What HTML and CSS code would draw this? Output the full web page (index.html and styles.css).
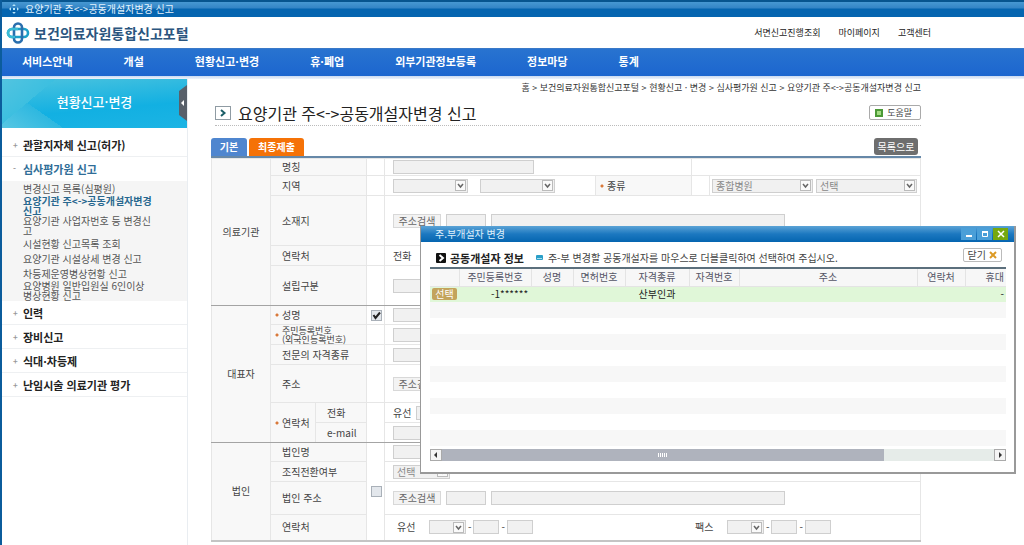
FILE: index.html
```
<!DOCTYPE html>
<html lang="ko">
<head>
<meta charset="utf-8">
<title>요양기관 주&lt;-&gt;공동개설자변경 신고</title>
<link rel="stylesheet" href="styles.css">
</head>
<body>
<div class="page">
  <div class="titlebar">
    <svg width="10" height="10" viewBox="0 0 10 10" aria-hidden="true"><path d="M5 0l1.800 2H3.200zM5 10L3.200 8h3.600zM0 5l2-1.800v3.600zM10 5L8 3.200v3.600zM4 4h2v2H4z" fill="#b9e6fa"/></svg>
    <span>요양기관 주&lt;-&gt;공동개설자변경 신고</span>
  </div>
  <header class="header">
    <a class="logo" href="#">
      <svg width="24" height="22" viewBox="0 0 24 22" fill="none" stroke-width="2.600" aria-hidden="true">
        <rect x="2" y="7" width="20" height="8" rx="4" stroke="#1da0c8"/>
        <rect x="8" y="1.500" width="8" height="19" rx="4" stroke="#2a6fae"/>
        <path d="M12 7H6a4 4 0 0 0 0 8h3" stroke="#3abbd5"/>
      </svg>
      <span>보건의료자원통합신고포털</span>
    </a>
    <div class="util"><a href="#">서면신고진행조회</a><a href="#">마이페이지</a><a href="#">고객센터</a></div>
  </header>
  <nav class="nav">
    <a href="#">서비스안내</a><a href="#">개설</a><a href="#">현황신고·변경</a><a href="#">휴·폐업</a><a href="#">외부기관정보등록</a><a href="#">정보마당</a><a href="#">통계</a>
  </nav>
  <div class="body">
    <aside class="side">
      <div class="banner">
        <h2>현황신고·변경</h2>
        <button class="fold" aria-label="메뉴 접기"><svg width="9" height="36" viewBox="0 0 9 36"><path d="M9 0v36L1 30V6z" fill="#58606a"/><path d="M6 15v6l-3-3z" fill="#fff"/></svg></button>
      </div>
      <ul class="menu">
        <li><a href="#">관할지자체 신고(허가)</a></li>
        <li class="open"><a href="#">심사평가원 신고</a>
          <ul class="submenu">
            <li><a href="#">변경신고 목록(심평원)</a></li>
            <li class="current double"><a href="#">요양기관 주&lt;-&gt;공동개설자변경<br>신고</a></li>
            <li class="double"><a href="#">요양기관 사업자번호 등 변경신<br>고</a></li>
            <li><a href="#">시설현황 신고목록 조회</a></li>
            <li><a href="#">요양기관 시설상세 변경 신고</a></li>
            <li><a href="#">차등제운영병상현황 신고</a></li>
            <li class="double"><a href="#">요양병원 일반입원실 6인이상<br>병상현황 신고</a></li>
          </ul>
        </li>
        <li><a href="#">인력</a></li>
        <li><a href="#">장비신고</a></li>
        <li><a href="#">식대·차등제</a></li>
        <li><a href="#">난임시술 의료기관 평가</a></li>
      </ul>
    </aside>
    <main class="main">
      <div class="crumbs">홈 &gt; 보건의료자원통합신고포털 &gt; 현황신고 · 변경 &gt; 심사평가원 신고 &gt; 요양기관 주&lt;-&gt;공동개설자변경 신고</div>
      <div class="heading">
        <svg class="heading-icon" width="16" height="14" viewBox="0 0 16 14" aria-hidden="true"><rect x=".5" y=".5" width="15" height="13" fill="#fff" stroke="#8f9ba3"/><path d="M6 4l3.500 3L6 10" fill="none" stroke="#1c5e68" stroke-width="2"/></svg>
        <h1>요양기관 주&lt;-&gt;공동개설자변경 신고</h1>
        <button class="help"><svg width="8" height="8" viewBox="0 0 8 8" aria-hidden="true"><path d="M0 0h8v8H0z" fill="#4c9a36"/><path d="M2 2h4v4H2z" fill="#a4dc84"/></svg>도움말</button>
      </div>
      <div class="tabs">
        <button class="tab blue">기본</button><button class="tab orange">최종제출</button>
        <button class="list">목록으로</button>
      </div>
      <table class="form">
        <colgroup><col class="c-group"><col class="c-label"><col class="c-sub"><col class="c-check"><col class="c-field"><col class="c-kind"><col class="c-check"><col></colgroup>
        <tbody>
          <tr class="h17"><th rowspan="5" class="group">의료기관</th><th colspan="2">명칭</th><td></td><td colspan="2"><div class="row"><input class="w141" aria-label="명칭"></div></td><td colspan="2"></td></tr>
          <tr class="h20"><th colspan="2">지역</th><td></td><td><div class="row wide"><select class="w75" aria-label="시도"><option></option></select><select class="w75" aria-label="시군구"><option></option></select></div></td><th class="need">종류</th><td></td><td class="tight"><div class="row narrow"><select class="grow" aria-label="종류"><option>종합병원</option></select><select class="grow" aria-label="세부 종류"><option>선택</option></select></div></td></tr>
          <tr class="h50"><th colspan="2">소재지</th><td></td><td colspan="4"><div class="row"><button class="addr">주소검색</button><input class="w40" aria-label="우편번호"><input class="w294" aria-label="소재지"></div></td></tr>
          <tr class="h20"><th colspan="2">연락처</th><td></td><td colspan="4">전화</td></tr>
          <tr class="h40"><th colspan="2">설립구분</th><td></td><td colspan="4"><div class="row"><input class="w141" aria-label="설립구분"></div></td></tr>
        </tbody>
        <tbody>
          <tr class="h19"><th rowspan="6" class="group">대표자</th><th colspan="2" class="need">성명</th><td class="check"><input type="checkbox" checked aria-label="대표자 성명"></td><td colspan="4"><div class="row"><input class="w141" aria-label="성명"></div></td></tr>
          <tr class="h20"><th colspan="2" class="need two">주민등록번호<br>(외국인등록번호)</th><td></td><td colspan="4"><div class="row"><input class="w141" aria-label="주민등록번호"></div></td></tr>
          <tr class="h20"><th colspan="2">전문의 자격종류</th><td></td><td colspan="4"><div class="row"><input class="w141" aria-label="전문의 자격종류"></div></td></tr>
          <tr class="h38"><th colspan="2">주소</th><td></td><td colspan="4"><div class="row"><button class="addr">주소검색</button></div></td></tr>
          <tr class="h20"><th rowspan="2" class="need">연락처</th><th>전화</th><td rowspan="2"></td><td colspan="4"><div class="row"><label for="tel">유선</label><input id="tel" class="w40"></div></td></tr>
          <tr class="h20"><th>e-mail</th><td colspan="4"><div class="row"><input class="w141" aria-label="e-mail"></div></td></tr>
        </tbody>
        <tbody>
          <tr class="h19"><th rowspan="4" class="group">법인</th><th colspan="2">법인명</th><td rowspan="4" class="check"><input type="checkbox" aria-label="법인"></td><td colspan="4"><div class="row"><input class="w141" aria-label="법인명"></div></td></tr>
          <tr class="h20"><th colspan="2">조직전환여부</th><td colspan="4"><div class="row"><select class="w57" aria-label="조직전환여부"><option>선택</option></select></div></td></tr>
          <tr class="h33"><th colspan="2">법인 주소</th><td colspan="4"><div class="row"><button class="addr">주소검색</button><input class="w40" aria-label="법인 우편번호"><input class="w294" aria-label="법인 주소"></div></td></tr>
          <tr class="h26"><th colspan="2">연락처</th><td colspan="4"><div class="phones">
            <div class="phone"><label for="p1">유선</label><select id="p1" class="w37"><option></option></select>-<input class="w26" aria-label="유선 국번">-<input class="w26" aria-label="유선 번호"></div>
            <div class="phone"><label for="f1">팩스</label><select id="f1" class="w37"><option></option></select>-<input class="w26" aria-label="팩스 국번">-<input class="w26" aria-label="팩스 번호"></div>
          </div></td></tr>
        </tbody>
      </table>
    </main>
  </div>
</div>

<section class="popup" role="dialog" aria-label="주.부개설자 변경">
  <div class="popup-bar">
    <span>주.부개설자 변경</span>
    <div class="controls">
      <button aria-label="최소화"><svg width="8" height="8" viewBox="0 0 8 8"><path d="M1 5h6v2H1z" fill="#fff"/></svg></button>
      <button aria-label="최대화"><svg width="8" height="8" viewBox="0 0 8 8"><path d="M1.500 2h5v4.500h-5z" fill="none" stroke="#fff"/><path d="M1 1h6v2H1z" fill="#fff"/></svg></button>
      <button class="x" aria-label="닫기"><svg width="8" height="8" viewBox="0 0 8 8"><path d="M1 1l6 6M7 1L1 7" stroke="#fff" stroke-width="1.500"/></svg></button>
    </div>
  </div>
  <div class="popup-body">
    <div class="popup-head">
      <svg width="10" height="10" viewBox="0 0 10 10" aria-hidden="true"><rect width="10" height="10" rx="1" fill="#111"/><path d="M3.500 2l3.500 3-3.500 3" fill="none" stroke="#fff" stroke-width="2"/></svg>
      <h2>공동개설자 정보</h2>
      <svg width="7" height="6" viewBox="0 0 7 6" aria-hidden="true"><rect width="7" height="5" rx="1" fill="#2b9fc8"/><path d="M1 3h5v1H1z" fill="#a6dcee"/></svg>
      <p>주-부 변경할 공동개설자를 마우스로 더블클릭하여 선택하여 주십시오.</p>
      <button class="close">닫기<svg width="8" height="8" viewBox="0 0 8 8" aria-hidden="true"><path d="M1 1l6 6M7 1L1 7" stroke="#dc9a24" stroke-width="2"/></svg></button>
    </div>
    <table class="grid">
      <colgroup><col class="g29"><col class="g72"><col class="g42"><col class="g52"><col class="g64"><col class="g50"><col><col class="g48"><col class="g41"></colgroup>
      <thead><tr><th></th><th>주민등록번호</th><th>성명</th><th>면허번호</th><th>자격종류</th><th>자격번호</th><th>주소</th><th>연락처</th><th class="end">휴대</th></tr></thead>
      <tbody>
        <tr class="picked"><td><button class="pick">선택</button></td><td class="rrn">-1******</td><td></td><td></td><td>산부인과</td><td></td><td></td><td></td><td class="end">-</td></tr>
        <tr><td colspan="9"></td></tr><tr><td colspan="9"></td></tr><tr><td colspan="9"></td></tr><tr><td colspan="9"></td></tr><tr><td colspan="9"></td></tr><tr><td colspan="9"></td></tr><tr><td colspan="9"></td></tr><tr><td colspan="9"></td></tr><tr><td colspan="9"></td></tr>
      </tbody>
    </table>
    <div class="scroll">
      <button aria-label="왼쪽"><svg width="6" height="6" viewBox="0 0 6 6"><path d="M4 0v6L1 3z" fill="#333"/></svg></button>
      <div class="track"><div class="thumb"><i></i><i></i><i></i><i></i><i></i></div></div>
      <button aria-label="오른쪽"><svg width="6" height="6" viewBox="0 0 6 6"><path d="M2 0v6l3-3z" fill="#333"/></svg></button>
    </div>
  </div>
</section>
</body>
</html>
```

FILE: styles.css
```
* { box-sizing: border-box; }
body { margin: 0; font: 10px/12px "Noto Sans CJK KR", sans-serif; color: #444; background: #fff; }
a { color: inherit; text-decoration: none; }
h1, h2, p, ul { margin: 0; padding: 0; }
ul { list-style: none; }
button, input, select { font: inherit; color: inherit; margin: 0; padding: 0; border: 0; border-radius: 0; background: none; }
svg { flex: none; display: block; }

.page { min-height: 100vh; display: flex; flex-direction: column; border-left: 2px solid #0b5c9c; }
.titlebar { height: 17px; display: flex; align-items: center; gap: 6px; padding-left: 7px; font-size: 10px; color: #e4f3fc; background: linear-gradient(#07558f 0, #07558f 2px, #4798d2 2px, #3485c6 8px, #0565b0 9px, #0565b0 100%); }
.header { height: 31px; display: flex; align-items: center; justify-content: space-between; padding: 0 93px 0 4px; }
.logo { display: flex; align-items: center; gap: 4px; font-size: 14px; line-height: 20px; font-weight: 700; color: #2b557e; }
.util { display: flex; gap: 18px; font-size: 9px; color: #222; }
.nav { height: 31px; display: flex; align-items: center; gap: 51px; padding: 0 20px 6px; font-size: 11px; font-weight: 700; color: #fff; background: linear-gradient(#4b7fbf 0, #2873d0 1px, #1c66cf 28px, #c8d9f1 28px, #eef3fb 31px); }

.body { flex: 1; display: flex; }
.side { width: 186px; flex: none; border-right: 1px solid #e9edf1; }
.banner { height: 49px; display: flex; align-items: center; justify-content: center; position: relative; padding-bottom: 4px; color: #fff; background: linear-gradient(140deg, #52c4e0 0, #3dbfe0 22%, transparent 22%), linear-gradient(35deg, #58c7e3 0, #2eb8e0 24%, transparent 24%), linear-gradient(175deg, #4cc3de, #12b0e2 60%, #1cb4e4); }
.banner h2 { font-size: 13px; line-height: 16px; font-weight: 500; }
.fold { position: absolute; right: 0; top: 6px; }
.menu { padding-top: 5px; font-size: 11px; font-weight: 700; color: #222; }
.menu > li { border-bottom: 1px solid #eef0f2; }
.menu > li > a { display: flex; align-items: center; height: 23px; padding-left: 11px; }
.menu > li > a::before { content: "+"; width: 10px; font-size: 8px; color: #999; }
.menu > .open > a { color: #2f6d97; height: 24px; }
.menu > .open > a::before { content: "-"; }
.menu > .open { border-bottom: 0; }
.submenu { background: #f5f5f5; font-size: 10px; line-height: 10px; font-weight: 400; color: #555; padding-left: 21px; }
.submenu li { height: 15px; display: flex; align-items: center; }
.submenu .double { height: 20px; }
.submenu .current { color: #28688f; font-weight: 700; }

.main { flex: 1; min-width: 0; padding: 3px 103px 4px 23px; }
.crumbs { font-size: 9px; text-align: right; color: #333; white-space: nowrap; }
.heading { margin: 6px 0 0 4px; height: 26px; display: flex; align-items: center; gap: 7px; border-bottom: 1px dotted #bbb; }
.heading h1 { font-size: 16px; line-height: 20px; font-weight: 400; color: #222; flex: 1; }
.help { height: 15px; padding: 0 8px 0 5px; display: flex; align-items: center; gap: 4px; font-size: 9px; border: 1px solid #aaa; border-radius: 2px; background: #fff; }
.tabs { display: flex; gap: 2px; align-items: flex-end; margin-top: 12px; height: 20px; border-bottom: 2px solid #6688a8; }
.tab { height: 18px; border-radius: 3px 3px 0 0; color: #fff; font-weight: 700; }
.blue { width: 36px; background: #4f86cf; }
.orange { width: 55px; background: #f57207; }
.list { height: 17px; width: 44px; margin: 0 3px 1px auto; border-radius: 3px; background: #6e6e6e; color: #fff; }

.form { width: 100%; table-layout: fixed; border-collapse: collapse; border-right: 1px solid #ccc; border-bottom: 2px solid #c4c4c4; }
.c-group { width: 59px; } .c-label { width: 45px; } .c-sub { width: 51px; } .c-check { width: 18px; } .c-field { width: 211px; } .c-kind { width: 96px; }
.form th, .form td { padding: 0; border: 1px solid #e6e6e6; text-align: left; font-weight: 400; white-space: nowrap; }
.form th { background: #f8f8f8; padding-left: 11px; color: #444; }
.form td { padding-left: 8px; }
.form .group { text-align: center; padding: 0; }
.form .need { background: radial-gradient(circle, #d9793a 0, #d9793a 1px, transparent 2px) 4px 50% / 4px 4px no-repeat #f8f8f8; }
.form .two { font-size: 9px; line-height: 9px; }
.form .check { padding: 0 0 0 4px; vertical-align: middle; }
.form .tight { padding: 0 3px 0 2px; }
.form tbody + tbody { border-top: 1px solid #a4a4a4; }
.form tbody + tbody tr:first-child > * { border-top-color: #a4a4a4; border-top-style: double; }
.h17 { height: 17px; } .h19 { height: 19px; } .h20 { height: 20px; } .h26 { height: 26px; } .h33 { height: 33px; } .h38 { height: 38px; } .h40 { height: 40px; } .h50 { height: 50px; }
.row { display: flex; align-items: center; gap: 5px; }
.wide { gap: 12px; } .narrow { gap: 3px; }
.form input, .form select { height: 14px; min-width: 0; border: 1px solid #cfcfcf; background-color: #f1f1f1; color: #888; }
.form select { appearance: none; padding-left: 3px; line-height: 12px; background-image: url("data:image/svg+xml,%3Csvg xmlns='http://www.w3.org/2000/svg' width='11' height='11'%3E%3Crect x='.5' y='.5' width='10' height='10' fill='%23fafafa' stroke='%23bbb'/%3E%3Cpath d='M3 4l2.500 3L8 4' fill='none' stroke='%23666' stroke-width='1.500'/%3E%3C/svg%3E"); background-repeat: no-repeat; background-position: right 1px center; }
.form input[type="checkbox"] { appearance: none; display: block; width: 11px; height: 11px; border: 1px solid #a9b0b8; background-color: #e3e7ec; }
.form input[type="checkbox"]:checked { background-image: url("data:image/svg+xml,%3Csvg xmlns='http://www.w3.org/2000/svg' width='9' height='9'%3E%3Cpath d='M1.500 4l2 3L8 1.500' fill='none' stroke='%23222' stroke-width='2'/%3E%3C/svg%3E"); }
.addr { width: 48px; height: 14px; border: 1px solid #d8d8d8; background: #f3f3f3; color: #666; font-size: 10px; line-height: 12px; }
.w26 { width: 26px; } .w37 { width: 37px; } .w40 { width: 40px; } .w57 { width: 57px; } .w75 { width: 75px; } .w141 { width: 141px; } .w294 { width: 294px; }
.grow { flex: 1; }
.phones { display: grid; grid-template-columns: 298px auto; padding-left: 4px; }
.phone { display: flex; align-items: center; gap: 2px; }
.phone label { width: 30px; }

.popup { position: absolute; left: 420px; top: 226px; width: 596px; background: #fff; border: 1px solid #999; border-width: 0 2px 2px 1px; }
.popup-bar { height: 16px; display: flex; align-items: center; justify-content: space-between; padding: 0 6px 0 14px; color: #dff0fb; background: linear-gradient(#5ba3d6, #1c78c0 50%, #0565b0); }
.controls { display: flex; gap: 1px; }
.controls button { width: 15px; height: 12px; display: flex; align-items: center; justify-content: center; background: #4a9fd8; }
.controls .x { background: #76a80f; }
.popup-body { padding: 6px 8px 11px 9px; }
.popup-head { height: 19px; display: flex; align-items: center; padding: 0 4px 0 6px; }
.popup-head h2 { font-size: 11px; line-height: 14px; color: #222; margin: 0 12px 0 4px; }
.popup-head p { flex: 1; margin-left: 5px; white-space: nowrap; }
.close { height: 14px; margin-bottom: 6px; padding: 0 4px; display: flex; align-items: center; gap: 3px; border: 1px solid #bbb; border-radius: 2px; }
.grid { width: 100%; table-layout: fixed; border-collapse: collapse; border-top: 2px solid #5b6f7c; }
.g29 { width: 29px; } .g72 { width: 72px; } .g42 { width: 42px; } .g52 { width: 52px; } .g64 { width: 64px; } .g50 { width: 50px; } .g48 { width: 48px; } .g41 { width: 41px; }
.grid th, .grid td { padding: 0; text-align: center; font-weight: 400; white-space: nowrap; }
.grid th { height: 18px; background: #f7f7f7; border-right: 1px solid #e4e4e4; border-bottom: 1px solid #e4e4e4; color: #556; }
.grid th:last-child { border-right: 0; }
.grid td { height: 16px; color: #222; }
.grid tbody tr:nth-child(even) { background: #f7f7f7; }
.grid .picked { background: #e0f7d8; }
.grid .end { text-align: right; padding-right: 2px; }
.grid .rrn { padding-left: 32px; text-align: left; }
.pick { display: block; width: 25px; height: 12px; margin: 0 auto; border-radius: 2px; background: #c3a45c; color: #fff; line-height: 12px; }
.scroll { display: flex; height: 12px; margin-top: 3px; background: #e6ece9; }
.scroll button { width: 12px; display: flex; align-items: center; justify-content: center; border: 1px solid #aaa; background: #f4f4f4; }
.track { flex: 1; }
.thumb { width: 80%; height: 12px; display: flex; align-items: center; justify-content: center; gap: 1px; background: #afb3bd; }
.thumb i { width: 1px; height: 4px; background: #fff; }
```
